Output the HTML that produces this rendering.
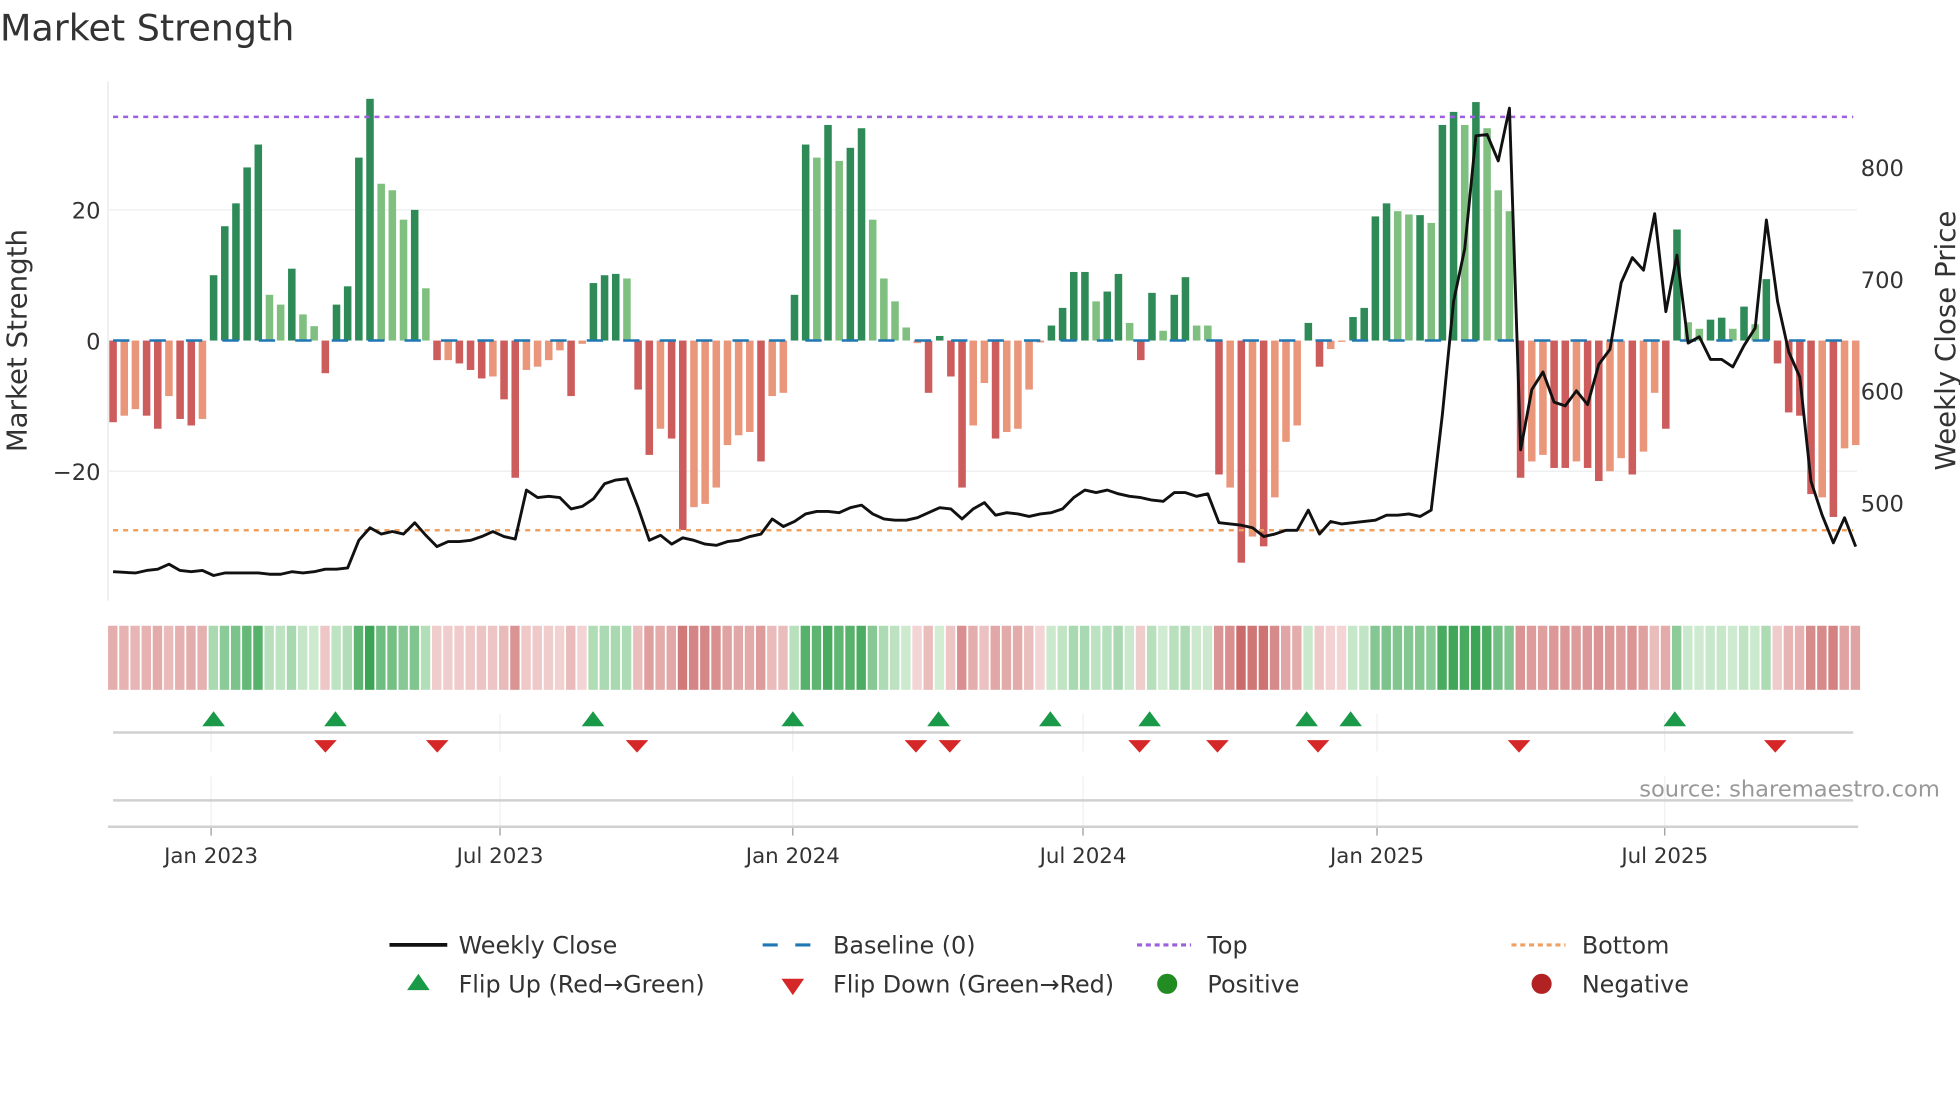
<!DOCTYPE html>
<html><head><meta charset="utf-8"><style>
html,body{margin:0;padding:0;background:#fff;}
svg{display:block;font-family:"DejaVu Sans","Liberation Sans",sans-serif;}
</style></head><body>
<svg id="s" width="1960" height="1102" viewBox="0 0 1560 877" xmlns="http://www.w3.org/2000/svg">
<rect width="1560" height="877" fill="#fff"/>
<text x="0" y="32" font-size="29" fill="#333">Market Strength</text>
<line x1="86" y1="65" x2="86" y2="478" stroke="#e6e6e6" stroke-width="1"/>
<g stroke="#eef0f2" stroke-width="1.2"><line x1="86" y1="167" x2="1478" y2="167"/><line x1="86" y1="375" x2="1478" y2="375"/></g>
<g font-size="18" fill="#333" text-anchor="end"><text x="80" y="174">20</text><text x="80" y="278">0</text><text x="80" y="382">−20</text></g>
<g font-size="18" fill="#333"><text x="1481" y="140">800</text><text x="1481" y="229">700</text><text x="1481" y="318">600</text><text x="1481" y="407">500</text></g>
<text transform="translate(21,271) rotate(-90)" font-size="22" fill="#333" text-anchor="middle">Market Strength</text>
<text transform="translate(1556,271) rotate(-90)" font-size="22" fill="#333" text-anchor="middle">Weekly Close Price</text>
<g id="bars"></g>
<line x1="90" y1="271" x2="1475" y2="271" stroke="#1f77b4" stroke-width="2" stroke-dasharray="13 16"/>
<line x1="90" y1="93" x2="1475" y2="93" stroke="#9b5fe0" stroke-width="2" stroke-dasharray="4 4"/>
<line x1="90" y1="422" x2="1475" y2="422" stroke="#eea060" stroke-width="2" stroke-dasharray="4 4"/>
<polyline id="price" fill="none" stroke="#111" stroke-width="2.3" stroke-linejoin="round"/>
<g id="heat"></g>
<g id="grid" stroke="#eef0f2" stroke-width="1"></g>
<line x1="90" y1="583" x2="1475" y2="583" stroke="#d0d0d0" stroke-width="2"/>
<line x1="90" y1="637" x2="1475" y2="637" stroke="#d0d0d0" stroke-width="2"/>
<line x1="86" y1="658" x2="1479" y2="658" stroke="#d0d0d0" stroke-width="2"/>
<g id="marks"></g>
<text x="1544" y="634" font-size="18" fill="#999" text-anchor="end">source: sharemaestro.com</text>
<g id="ticks" font-size="17" fill="#333" text-anchor="middle"></g>
<g font-size="19" fill="#333">
<line x1="310" y1="752" x2="356" y2="752" stroke="#111" stroke-width="3"/>
<text x="365" y="759">Weekly Close</text>
<line x1="607" y1="752" x2="650" y2="752" stroke="#1f77b4" stroke-width="2.5" stroke-dasharray="12 14"/>
<text x="663" y="759">Baseline (0)</text>
<line x1="905" y1="752" x2="948" y2="752" stroke="#9b5fe0" stroke-width="2.5" stroke-dasharray="4 3"/>
<text x="961" y="759">Top</text>
<line x1="1203" y1="752" x2="1246" y2="752" stroke="#eea060" stroke-width="2.5" stroke-dasharray="4 3"/>
<text x="1259" y="759">Bottom</text>
<polygon points="333,775 342,788 324,788" fill="#1a9a48"/>
<text x="365" y="790">Flip Up (Red→Green)</text>
<polygon points="622,779 640,779 631,792" fill="#d62728"/>
<text x="663" y="790">Flip Down (Green→Red)</text>
<circle cx="929" cy="783" r="8" fill="#228b22"/>
<text x="961" y="790">Positive</text>
<circle cx="1227" cy="783" r="8" fill="#b22222"/>
<text x="1259" y="790">Negative</text>
</g>
</svg>
<script>
var NS="http://www.w3.org/2000/svg";
function el(t,a,p){var e=document.createElementNS(NS,t);for(var k in a)e.setAttribute(k,a[k]);document.getElementById(p).appendChild(e);return e;}
var B=[[-12.5,1],[-11.5,0],[-10.5,0],[-11.5,1],[-13.5,1],[-8.5,0],[-12,1],[-13,1],[-12,0],
[10,1],[17.5,1],[21,1],[26.5,1],[30,1],[7,0],[5.5,0],[11,1],[4,0],[2.2,0],[-5,1],[5.5,1],[8.3,1],[28,1],[37,1],[24,0],[23,0],[18.5,0],[20,1],[8,0],
[-3,1],[-3,0],[-3.5,1],[-4.5,1],[-5.8,1],[-5.5,0],[-9,1],[-21,1],[-4.5,0],[-4,0],[-3,0],[-1.5,0],[-8.5,1],[-0.5,0],
[8.8,1],[10,1],[10.2,1],[9.5,0],[-7.5,1],[-17.5,1],[-13.5,0],[-15,1],[-29,1],[-25.5,0],[-25,0],[-22.5,0],[-16,0],[-14.5,0],[-14,0],[-18.5,1],[-8.5,0],[-8,0],
[7,1],[30,1],[28,0],[33,1],[27.5,0],[29.5,1],[32.5,1],[18.5,0],[9.5,0],[6,0],[2,0],[-0.4,0],[-8,1],[0.7,1],[-5.5,1],[-22.5,1],[-13,0],[-6.5,0],[-15,1],[-14,0],[-13.5,0],[-7.5,0],[-0.3,0],
[2.3,1],[5,1],[10.5,1],[10.5,1],[6,0],[7.5,1],[10.2,1],[2.7,0],[-3,1],[7.3,1],[1.5,0],[7,1],[9.7,1],[2.3,0],[2.3,0],
[-20.5,1],[-22.5,0],[-34,1],[-30,0],[-31.5,1],[-24,0],[-15.5,0],[-13,0],[2.7,1],[-4,1],[-1.3,0],[-0.2,0],[3.6,1],[5,1],
[19,1],[21,1],[19.8,0],[19.3,0],[19.2,1],[18,0],[33,1],[35,1],[33,0],[36.5,1],[32.5,0],[23,0],[19.8,0],
[-21,1],[-18.5,0],[-17.5,0],[-19.5,1],[-19.5,1],[-18.5,0],[-19.5,1],[-21.5,1],[-20,0],[-18,0],[-20.5,1],[-17,0],[-8,0],[-13.5,1],
[17,1],[2.8,0],[1.8,0],[3.2,1],[3.5,1],[1.8,0],[5.2,1],[2.5,0],[9.4,1],
[-3.5,1],[-11,1],[-11.5,1],[-23.5,1],[-24,0],[-27,1],[-16.5,0],[-16,0]];
var P=[455,455.5,456,454,453,449,454,455,454,458,456,456,456,456,457,457,455,456,455,453,453,452,430,420,425,423,425,416,426,435,431,431,430,427,423,427,429,390,396,395,396,405,403,397,385,382,381,404,430,426,433,428,430,433,434,431,430,427,425,413,419,415,409,407,407,408,404,402,409,413,414,414,412,408,404,405,413,405,400,410,408,409,411,409,408,405,396,390,392,390,393,395,396,398,399,392,392,395,393,416,417,418,420,427,425,422,422,406,425,415,417,416,415,414,410,410,409,411,406,330,240,198,108,107,128,86,358,310,296,320,323,311,322,290,278,225,205,215,170,248,203,273,268,286,286,292,275,261,175,240,280,300,383,410,432,412,435];
var n=B.length, x0=90, dx=(1477-90)/(n-1);
function mix(a,b,t){return "rgb("+a.map(function(v,i){return Math.round(v+(b[i]-v)*t);}).join(",")+")";}
var pts=[];
for(var i=0;i<n;i++){
 var v=B[i][0],d=B[i][1],cx=x0+i*dx,h=Math.abs(v)*5.2;
 var c=v>=0?(d?"#2e8b57":"#7fbf7f"):(d?"#cd5c5c":"#e9967a");
 el("rect",{x:cx-3,y:v>=0?271-h:271,width:6,height:Math.max(h,0.5),fill:c},"bars");
 var t=Math.min(Math.abs(v)/36,1);
 var hc=v>=0?mix([214,238,214],[60,165,85],t):mix([244,214,214],[200,100,100],t);
 el("rect",{x:cx-4,y:498,width:dx-1.4,height:51,fill:hc},"heat");
 pts.push(cx.toFixed(1)+","+(P[i]||P[P.length-1]));
}
document.getElementById("price").setAttribute("points",pts.join(" "));
var T=[[168,"Jan 2023"],[398,"Jul 2023"],[631,"Jan 2024"],[862,"Jul 2024"],[1096,"Jan 2025"],[1325,"Jul 2025"]];
T.forEach(function(t){
 el("line",{x1:t[0],y1:568,x2:t[0],y2:598},"grid");
 el("line",{x1:t[0],y1:618,x2:t[0],y2:658},"grid");
 el("line",{x1:t[0],y1:658,x2:t[0],y2:665,stroke:"#999"},"grid");
 el("text",{x:t[0],y:687},"ticks").textContent=t[1];
});
[170,267,472,631,747,836,915,1040,1075,1333].forEach(function(x){el("polygon",{points:(x)+",566 "+(x+9)+",578 "+(x-9)+",578",fill:"#1a9a48"},"marks");});
[259,348,507,729,756,907,969,1049,1209,1413].forEach(function(x){el("polygon",{points:(x-9)+",589 "+(x+9)+",589 "+x+",599",fill:"#d62728"},"marks");});
</script>
</body></html>
